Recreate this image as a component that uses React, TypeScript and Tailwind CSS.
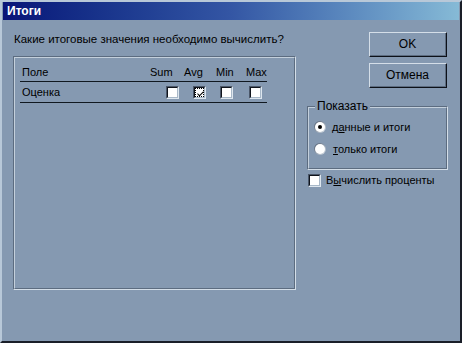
import React from "react";

const font = { fontFamily: '"Liberation Sans", Arial, sans-serif' };

function Check({ checked = false, focus = false }: { checked?: boolean; focus?: boolean }) {
  return (
    <div className="w-[13px] h-[13px] border-t border-l border-t-[#4a5668] border-l-[#4a5668] border-b border-r border-b-[#dde6ee] border-r-[#dde6ee] shrink-0">
      <div className="w-full h-full border-t border-l border-t-[#10141c] border-l-[#10141c] border-b border-r border-b-[#a8b8c8] border-r-[#a8b8c8] bg-white relative">
        {focus && <div className="absolute inset-0 border border-dotted border-black" />}
        {checked && (
          <svg viewBox="0 0 9 9" className="absolute left-[1px] top-[1px] w-[9px] h-[9px]">
            <path d="M1.5 4 L3.5 6 L7.5 2 L7.5 3.5 L3.5 7.5 L1.5 5.5 Z" fill="black" />
          </svg>
        )}
      </div>
    </div>
  );
}

function Radio({ checked = false }: { checked?: boolean }) {
  return (
    <div className="w-[12px] h-[12px] rounded-full bg-gradient-to-br from-[#4a5668] to-[#e0e8f0] p-[1px] shrink-0">
      <div className="w-full h-full rounded-full bg-white flex items-center justify-center">
        {checked && <div className="w-[4px] h-[4px] rounded-full bg-black" />}
      </div>
    </div>
  );
}

function Button({ children }: { children: React.ReactNode }) {
  return (
    <div className="w-[78px] h-[25px] border-t border-l border-t-[#d4dee8] border-l-[#d4dee8] border-b border-r border-b-[#0c1018] border-r-[#0c1018]">
      <div className="w-full h-full border-b border-r border-b-[#5c6c80] border-r-[#5c6c80] flex items-center justify-center text-[12px] text-black">
        {children}
      </div>
    </div>
  );
}

export default function App() {
  return (
    <div
      className="w-[462px] h-[343px] bg-[#8599b1] border-t-2 border-l-2 border-t-[#b8c8d8] border-l-[#b8c8d8] border-b-2 border-r-2 border-b-[#1a1e28] border-r-[#1a1e28] flex flex-col text-[11px] text-black overflow-hidden"
      style={font}
    >
      <div className="h-[18px] mx-[1px] bg-gradient-to-r from-[#0a1478] via-[#3456a4] to-[#86bad6] flex items-center pl-[4px]">
        <span className="text-white font-bold text-[12px]">Итоги</span>
      </div>
      <div className="flex flex-1">
        <div className="flex flex-col pl-[11px] w-[296px]">
          <div className="h-[36px] flex items-center pl-[1px] pt-[4px] text-[11.5px]">
            Какие итоговые значения необходимо вычислить?
          </div>
          <div className="w-[283px] h-[234px] border border-t-[#5c6c80] border-l-[#5c6c80] border-b-[#d4dee8] border-r-[#d4dee8]">
            <div className="w-full h-full border border-t-[#c4d0dc] border-l-[#c4d0dc] border-b-[#5c6c80] border-r-[#5c6c80] pl-[5px] pt-[5px]">
              <div className="w-[247px]">
                <div className="flex h-[18px] items-center">
                  <div className="w-[130px] pl-[2px]">Поле</div>
                  <div className="w-[34px]">Sum</div>
                  <div className="w-[32px]">Avg</div>
                  <div className="w-[30px]">Min</div>
                  <div>Max</div>
                </div>
                <div className="h-[1px] bg-[#101820]" />
                <div className="flex h-[20px] items-center">
                  <div className="w-[146px] pl-[2px]">Оценка</div>
                  <Check />
                  <div className="w-[14px]" />
                  <Check checked focus />
                  <div className="w-[14px]" />
                  <Check />
                  <div className="w-[16px]" />
                  <Check />
                </div>
                <div className="h-[1px] bg-[#101820]" />
              </div>
            </div>
          </div>
        </div>
        <div className="flex flex-col pl-[71px] pt-[12px]">
          <Button>OK</Button>
          <div className="h-[6px]" />
          <Button>Отмена</Button>
          <div className="h-[18px]" />
          <div className="relative -ml-[62px] w-[141px] h-[64px] border border-t-[#5c6c80] border-l-[#5c6c80] border-b-[#d4dee8] border-r-[#d4dee8]">
            <div className="w-full h-full border border-t-[#c4d0dc] border-l-[#c4d0dc] border-b-[#5c6c80] border-r-[#5c6c80] pl-[5px] pt-[13px] flex flex-col gap-[10px]">
              <div className="flex items-center h-[12px]">
                <Radio checked />
                <span className="ml-[6px]">д<span className="underline">а</span>нные и итоги</span>
              </div>
              <div className="flex items-center h-[12px]">
                <Radio />
                <span className="ml-[7px]"><span className="underline">т</span>олько итоги</span>
              </div>
            </div>
            <div className="absolute -top-[8px] left-[7px] px-[2px] bg-[#8599b1] text-[12px] leading-[14px]">Показать</div>
          </div>
          <div className="flex items-center -ml-[61px] mt-[4px] h-[13px]">
            <Check />
            <span className="ml-[5px]">В<span className="underline">ы</span>числить проценты</span>
          </div>
        </div>
      </div>
    </div>
  );
}
